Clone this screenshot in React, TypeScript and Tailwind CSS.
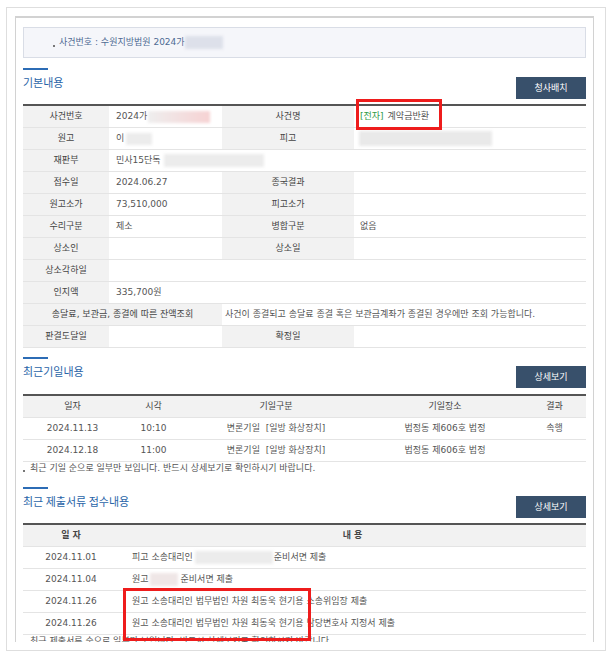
import React from 'react';

// small blurred block standing in for redacted text
const Blur = ({ className }: { className: string }) => (
  <span className={`inline-block shrink-0 blur-[1.5px] ${className}`} />
);

const Bullet = () => <span className="mt-[6px] inline-block h-[2px] w-[2px] shrink-0 bg-[#777]" />;

const SectionHead = ({ title, button }: { title: string; button: string }) => (
  <div className="flex items-start justify-between">
    <div>
      <div className="h-[2px] w-[25px] bg-[#2c6cb5]" />
      <div className="mt-[4px] font-['Noto_Sans_CJK_KR',sans-serif] text-[11px] leading-[16px] text-[#2a65a8]">{title}</div>
    </div>
    <button className="mt-[9px] h-[22px] w-[70px] bg-[#38506b] font-['Noto_Sans_CJK_KR',sans-serif] text-[9px] text-white">
      {button}
    </button>
  </div>
);

const L = 'flex h-[22px] items-center justify-center border-b border-[#e4e4e4] bg-[#f2f2f2] text-[#444]';
const V = 'flex h-[22px] items-center border-b border-[#e4e4e4] bg-white whitespace-nowrap';
const TH = 'flex h-[22px] items-center justify-center border-b border-[#e4e4e4] bg-[#f2f2f2] text-[#444]';
const TD = 'flex h-[22px] items-center justify-center border-b border-[#e4e4e4] whitespace-nowrap';

const hearings = [
  { date: '2024.11.13', time: '10:10', kind: '변론기일\u00a0 [일방 화상장치]', place: '법정동 제606호 법정', result: '속행' },
  { date: '2024.12.18', time: '11:00', kind: '변론기일\u00a0 [일방 화상장치]', place: '법정동 제606호 법정', result: '' },
];

export default function App() {
  return (
    <div className="relative h-[658px] w-[614px] overflow-hidden bg-white pl-[6px] pt-[7px] font-['DejaVu_Sans','Noto_Sans_CJK_KR',sans-serif] text-[9px] text-[#555]">
      <div className="h-[644px] w-[600px] border border-[#dedede] pl-[8px] pt-[8px]">
        <div className="h-[626px] w-[579px] overflow-hidden border-x border-t-2 border-[#d2d2d2] px-[7px]">
          {/* case number box */}
          <div className="mt-[9px] flex h-[31px] items-center border border-[#d9dde6] bg-[#f5f6fa] pl-[29px] text-[#4d6a93]">
            <Bullet />
            <span className="ml-[4px]">사건번호 : 수원지방법원 2024가</span>
            <Blur className="h-[13px] w-[38px] bg-[#dde0ea]" />
          </div>

          {/* 기본내용 */}
          <div className="mt-[10px]">
            <SectionHead title="기본내용" button="청사배치" />
            <div className="mt-[5px] grid grid-cols-[86px_113px_132px_232px] border-t-2 border-[#555]">
              <div className={L}>사건번호</div>
              <div className={`${V} pl-[7px]`}>
                2024가
                <Blur className="ml-[1px] h-[12px] w-[62px] bg-gradient-to-r from-[#eeeeee] to-[#f6d2d3]" />
              </div>
              <div className={L}>사건명</div>
              <div className={`${V} pl-[6px]`}>
                <span className="text-[#2f9a46]">[전자]</span>
                <span className="ml-[4px]">계약금반환</span>
              </div>

              <div className={L}>원고</div>
              <div className={`${V} pl-[7px]`}>
                이
                <Blur className="ml-[2px] h-[12px] w-[26px] bg-[#ececec]" />
              </div>
              <div className={L}>피고</div>
              <div className={`${V} pl-[5px]`}>
                <Blur className="h-[15px] w-[133px] bg-[#e9e9e9]" />
              </div>

              <div className={L}>재판부</div>
              <div className={`${V} col-span-3 pl-[7px]`}>
                민사15단독
                <Blur className="ml-[3px] h-[13px] w-[100px] bg-[#ececec]" />
              </div>

              <div className={L}>접수일</div>
              <div className={`${V} pl-[7px]`}>2024.06.27</div>
              <div className={L}>종국결과</div>
              <div className={V} />

              <div className={L}>원고소가</div>
              <div className={`${V} pl-[7px]`}>73,510,000</div>
              <div className={L}>피고소가</div>
              <div className={V} />

              <div className={L}>수리구분</div>
              <div className={`${V} pl-[7px]`}>제소</div>
              <div className={L}>병합구분</div>
              <div className={`${V} pl-[6px]`}>없음</div>

              <div className={L}>상소인</div>
              <div className={V} />
              <div className={L}>상소일</div>
              <div className={V} />

              <div className={L}>상소각하일</div>
              <div className={`${V} col-span-3`} />

              <div className={L}>인지액</div>
              <div className={`${V} col-span-3 pl-[7px]`}>335,700원</div>

              <div className={`${L} col-span-2`}>송달료, 보관금, 종결에 따른 잔액조회</div>
              <div className={`${V} col-span-2 pl-[3px]`}>
                사건이 종결되고 송달료 종결 혹은 보관금계좌가 종결된 경우에만 조회 가능합니다.
              </div>

              <div className={L}>판결도달일</div>
              <div className={V} />
              <div className={L}>확정일</div>
              <div className={V} />
            </div>
          </div>

          {/* 최근기일내용 */}
          <div className="mt-[9px]">
            <SectionHead title="최근기일내용" button="상세보기" />
            <div className="mt-[6px] grid grid-cols-[99px_63px_182px_156px_63px] border-t-2 border-[#555]">
              <div className={TH}>일자</div>
              <div className={TH}>시각</div>
              <div className={TH}>기일구분</div>
              <div className={TH}>기일장소</div>
              <div className={TH}>결과</div>
              {hearings.map((h, i) => (
                <React.Fragment key={i}>
                  <div className={TD}>{h.date}</div>
                  <div className={TD}>{h.time}</div>
                  <div className={TD}>{h.kind}</div>
                  <div className={TD}>{h.place}</div>
                  <div className={TD}>{h.result}</div>
                </React.Fragment>
              ))}
            </div>
            <div className="flex h-[12px] items-center leading-[12px]">
              <Bullet />
              <span className="ml-[5px] whitespace-nowrap">최근 기일 순으로 일부만 보입니다. 반드시 상세보기로 확인하시기 바랍니다.</span>
            </div>
          </div>

          {/* 최근 제출서류 접수내용 */}
          <div className="mt-[13px]">
            <SectionHead title="최근 제출서류 접수내용" button="상세보기" />
            <div className="mt-[5px] grid grid-cols-[96px_467px] border-t-2 border-[#555]">
              <div className={`${TH} font-bold`}>일 자</div>
              <div className={`${TH} font-bold`}>내 용</div>

              <div className={TD}>2024.11.01</div>
              <div className={`${V} pl-[13px]`}>
                피고 소송대리인
                <Blur className="ml-[2px] h-[13px] w-[78px] bg-[#ececec]" />
                <span className="ml-[1px]">준비서면 제출</span>
              </div>

              <div className={TD}>2024.11.04</div>
              <div className={`${V} pl-[13px]`}>
                원고
                <Blur className="ml-[1px] h-[13px] w-[28px] bg-[#efe6e6]" />
                <span className="ml-[3px]">준비서면 제출</span>
              </div>

              <div className={TD}>2024.11.26</div>
              <div className={`${V} pl-[13px]`}>원고 소송대리인 법무법인 차원 최동욱 현기용 소송위임장 제출</div>

              <div className={TD}>2024.11.26</div>
              <div className={`${V} pl-[13px]`}>원고 소송대리인 법무법인 차원 최동욱 현기용 담당변호사 지정서 제출</div>
            </div>
            <div className="flex h-[12px] items-center leading-[12px]">
              <Bullet />
              <span className="ml-[5px] whitespace-nowrap">최근 제출서류 순으로 일부만 보입니다. 반드시 상세보기로 확인하시기 바랍니다.</span>
            </div>
          </div>
        </div>
      </div>

      {/* red highlight annotations */}
      <div className="absolute left-[356px] top-[99px] h-[31px] w-[86px] border-[3px] border-[#ee1c1c]" />
      <div className="absolute left-[123px] top-[588px] h-[53px] w-[188px] border-[3px] border-[#ee1c1c]" />
    </div>
  );
}
